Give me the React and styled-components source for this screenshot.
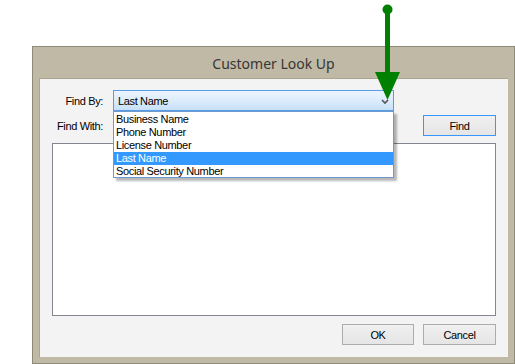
import React from "react";
import styled, { createGlobalStyle } from "styled-components";

const Global = createGlobalStyle`
  html, body { margin: 0; padding: 0; background: #ffffff; }
  body { font-family: "Liberation Sans", Arial, sans-serif; }
  * { box-sizing: border-box; }
`;

const Desktop = styled.div`
  position: relative;
  width: 515px;
  height: 364px;
  padding: 46px 0 0 32px;
  overflow: hidden;
`;

const Window = styled.div`
  width: 483px;
  height: 318px;
  background: #c0b9a5;
  border: 1px solid #8f8a78;
  display: flex;
  flex-direction: column;
  padding: 0 6px 6px 6px;
`;

const TitleBar = styled.div`
  height: 31px;
  display: flex;
  align-items: center;
  justify-content: center;
  font-family: "Noto Sans", "Open Sans", sans-serif;
  font-size: 14px;
  color: #363636;
  padding-top: 1px;
`;

const Panel = styled.div`
  flex: 1;
  background: #f3f3f3;
  border-left: 1px solid #aaa491;
  border-top: 1px solid #aaa491;
  padding: 11px 12px 12px 12px;
  display: flex;
  flex-direction: column;
  font-size: 11px;
  letter-spacing: -0.35px;
  color: #000;
`;

const Row = styled.div`
  display: flex;
  align-items: center;
  height: 21px;
  margin-top: ${(p) => p.$mt || 0}px;
`;

const Label = styled.div`
  width: 51px;
  text-align: right;
  margin-right: 10px;
  white-space: nowrap;
  color: #000;
`;

const ComboWrap = styled.div`
  position: relative;
  width: 281px;
  height: 21px;
`;

const Combo = styled.div`
  width: 100%;
  height: 100%;
  border: 1px solid #569de5;
  background: linear-gradient(#ecf4fc, #dcecfc 50%, #c7e0f8);
  display: flex;
  align-items: center;
  padding-left: 4px;
  justify-content: space-between;
`;

const Chevron = styled.svg`
  margin-right: 4px;
  margin-top: 2px;
`;

const List = styled.div`
  position: absolute;
  left: 0;
  top: 21px;
  width: 281px;
  height: 67px;
  background: #fff;
  border: 1px solid #6e9ad0;
  box-shadow: 3px 3px 2px rgba(0, 0, 0, 0.28);
  padding-top: 1px;
  z-index: 5;
`;

const Item = styled.div`
  height: 13px;
  line-height: 13px;
  padding-left: 2px;
  background: ${(p) => (p.$selected ? "#3399ff" : "transparent")};
  color: ${(p) => (p.$selected ? "#fff" : "#000")};
`;

const Spacer = styled.div`
  flex: 1;
`;

const Button = styled.button`
  width: ${(p) => p.$w || 73}px;
  height: 21px;
  font-family: "Liberation Sans", Arial, sans-serif;
  font-size: 11px;
  letter-spacing: -0.35px;
  color: #000;
  border: 1px solid ${(p) => (p.$focused ? "#3399ff" : "#acacac")};
  background: linear-gradient(#f0f0f0, #e5e5e5);
  padding: 0;
  margin: 0;
  margin-left: ${(p) => p.$ml || 0}px;
`;

const Results = styled.div`
  margin-top: 7px;
  height: 173px;
  border: 1px solid #828790;
  background: #fff;
  width: 444px;
`;

const ButtonRow = styled.div`
  display: flex;
  justify-content: flex-end;
  margin-top: 8px;
`;

const Arrow = styled.svg`
  position: absolute;
  left: 0;
  top: 0;
  pointer-events: none;
  z-index: 10;
`;

const items = [
  "Business Name",
  "Phone Number",
  "License Number",
  "Last Name",
  "Social Security Number",
];

export default function App() {
  return (
    <Desktop>
      <Global />
      <Window>
        <TitleBar>Customer Look Up</TitleBar>
        <Panel>
          <Row>
            <Label>Find By:</Label>
            <ComboWrap>
              <Combo>
                <span>Last Name</span>
                <Chevron width="8" height="6" viewBox="0 0 8 6">
                  <path d="M1 1 L4 4 L7 1" fill="none" stroke="#555" strokeWidth="1.6" />
                </Chevron>
              </Combo>
              <List>
                {items.map((t) => (
                  <Item key={t} $selected={t === "Last Name"}>
                    {t}
                  </Item>
                ))}
              </List>
            </ComboWrap>
          </Row>
          <Row $mt={4}>
            <Label>Find With:</Label>
            <Spacer />
            <Button $focused>Find</Button>
          </Row>
          <Results />
          <ButtonRow>
            <Button $w={72}>OK</Button>
            <Button $ml={9}>Cancel</Button>
          </ButtonRow>
        </Panel>
      </Window>
      <Arrow width="515" height="364" viewBox="0 0 515 364">
        <circle cx="387.5" cy="9.5" r="5" fill="#008000" />
        <rect x="385" y="9" width="5" height="65" fill="#008000" />
        <polygon points="375,72 400,72 387.5,100" fill="#008000" />
      </Arrow>
    </Desktop>
  );
}
